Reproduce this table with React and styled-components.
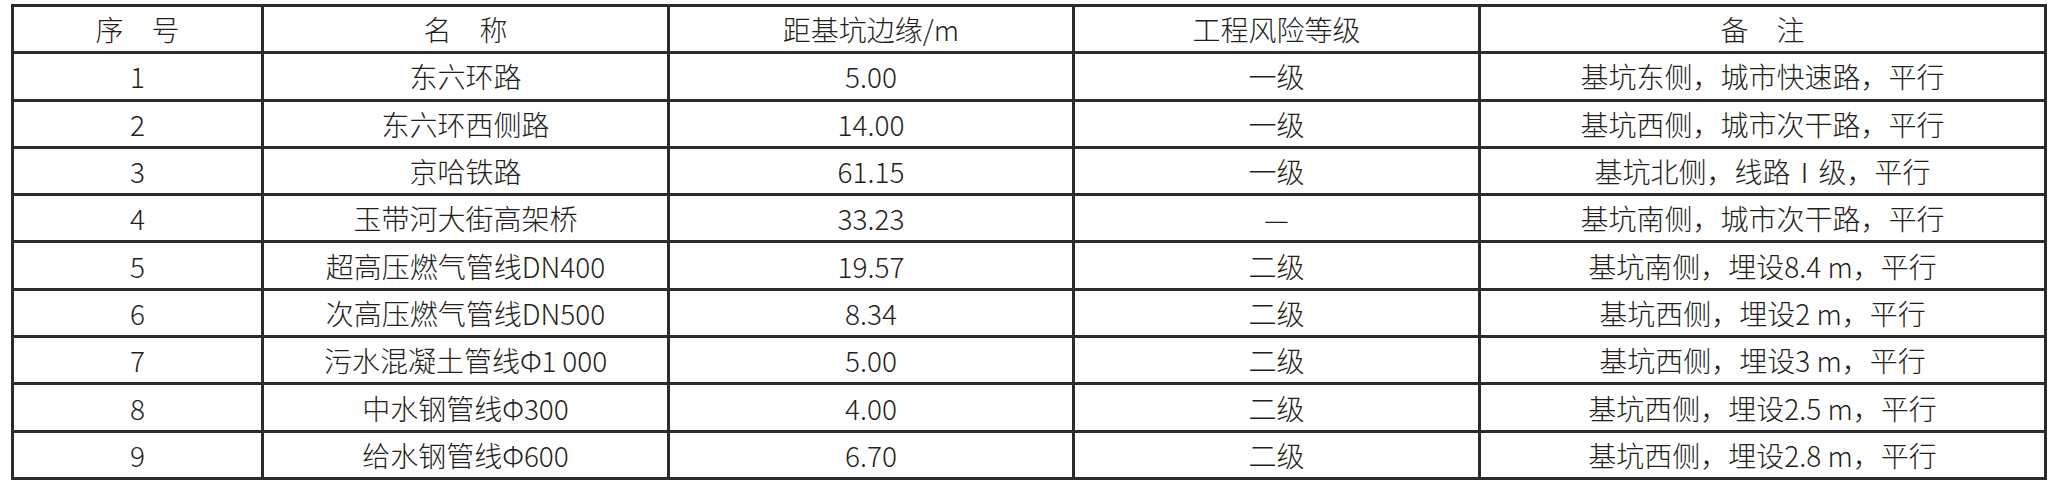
import React from "react";
import styled, {createGlobalStyle} from "styled-components";

const GlobalStyle = createGlobalStyle`
  html, body {
    margin: 0;
    padding: 0;
    background: #fff;
  }
  body {
    font-family: "Noto Sans CJK SC", "Noto Sans", sans-serif;
    color: #231f20;
  }
`;

const Page = styled.div`
  padding: 4px 0 0 11px;
`;

const Table = styled.table`
  border-collapse: collapse;
  table-layout: fixed;
  width: 2033px;
  border: 3px solid #2b2b2b;
`;

const Row = styled.tr`
  height: 47.3px;
`;

const Cell = styled.td`
  border: 3px solid #2b2b2b;
  padding: 0;
  text-align: center;
  vertical-align: middle;
  font-size: 28px;
  font-weight: 300;
  line-height: 1;
  white-space: nowrap;
`;

const HeadCell = styled(Cell).attrs({as: "th"})`
  font-weight: 300;
`;

const columns = [250, 406, 405, 406, 566];

const headers = ["序\u3000号", "名\u3000称", "距基坑边缘/m", "工程风险等级", "备\u3000注"];

const rows = [
    ["1", "东六环路", "5.00", "一级", "基坑东侧，城市快速路，平行"],
    ["2", "东六环西侧路", "14.00", "一级", "基坑西侧，城市次干路，平行"],
    ["3", "京哈铁路", "61.15", "一级", "基坑北侧，线路Ⅰ级，平行"],
    ["4", "玉带河大街高架桥", "33.23", "—", "基坑南侧，城市次干路，平行"],
    ["5", "超高压燃气管线DN400", "19.57", "二级", "基坑南侧，埋设8.4 m，平行"],
    ["6", "次高压燃气管线DN500", "8.34", "二级", "基坑西侧，埋设2 m，平行"],
    ["7", "污水混凝土管线Φ1\u2009000", "5.00", "二级", "基坑西侧，埋设3 m，平行"],
    ["8", "中水钢管线Φ300", "4.00", "二级", "基坑西侧，埋设2.5 m，平行"],
    ["9", "给水钢管线Φ600", "6.70", "二级", "基坑西侧，埋设2.8 m，平行"],
];

export default function App() {
    return (
        <Page>
            <GlobalStyle/>
            <Table>
                <colgroup>
                    {columns.map((w, i) => <col key={i} style={{width: w}}/>)}
                </colgroup>
                <thead>
                <Row>
                    {headers.map(h => <HeadCell key={h}>{h}</HeadCell>)}
                </Row>
                </thead>
                <tbody>
                {rows.map(r => (
                    <Row key={r[0]}>
                        {r.map((c, i) => <Cell key={i}>{c}</Cell>)}
                    </Row>
                ))}
                </tbody>
            </Table>
        </Page>
    );
}
